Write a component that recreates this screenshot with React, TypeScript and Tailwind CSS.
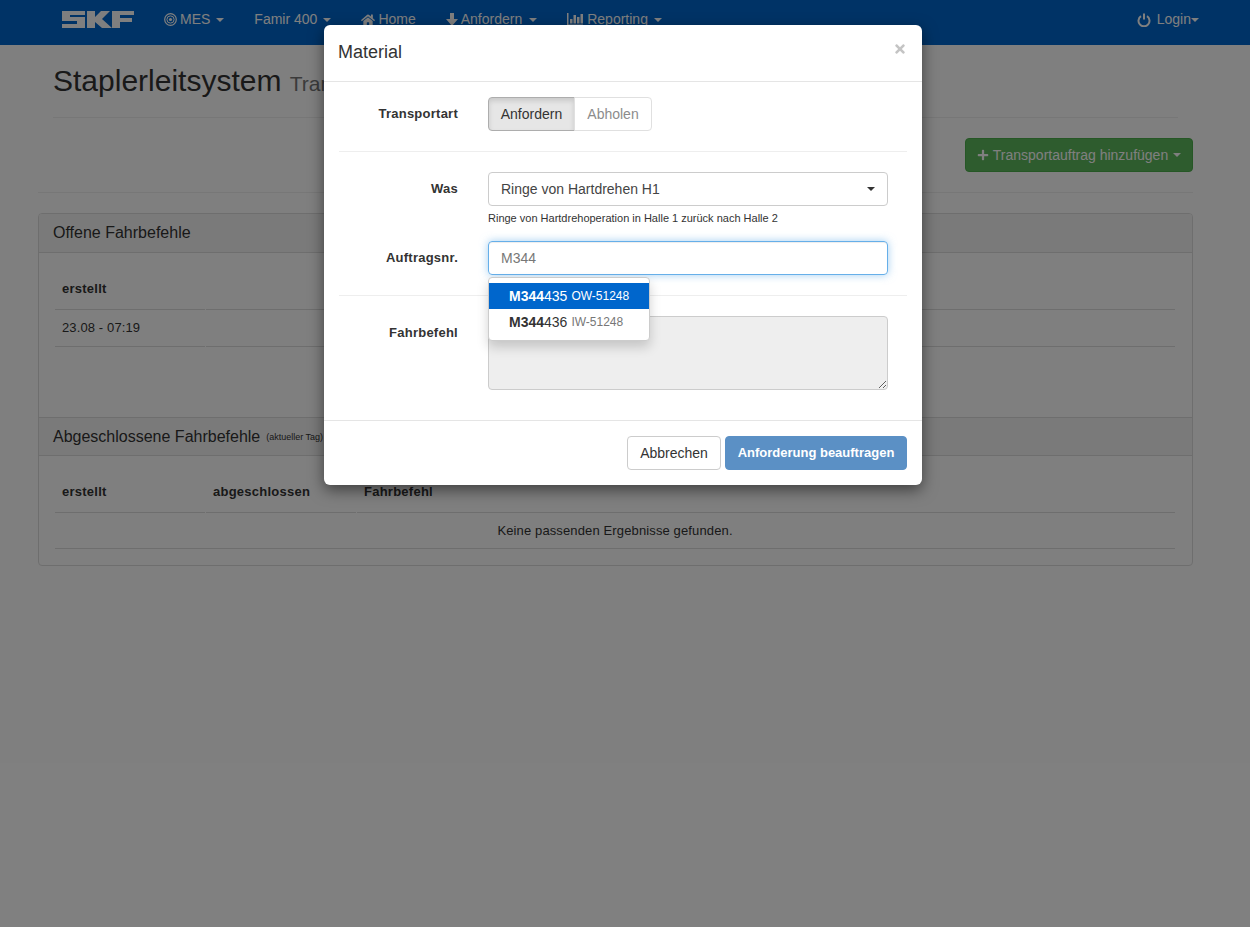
import { FaHome, FaPlus, FaTimes } from "react-icons/fa";

const Caret = ({ className = "" }: { className?: string }) => (
  <span className={`inline-block h-0 w-0 border-x-4 border-t-4 border-x-transparent border-t-current align-middle ${className}`} />
);

const SkfLogo = () => (
  <svg width="72" height="17" viewBox="0 0 72 17" fill="currentColor">
    <path d="M0 0h23v4H8v2h15v11H0v-4h15v-3H0z" />
    <path d="M25 0h8v6l6-6h9l-8 8 10 9h-10l-7-6v6h-8z" />
    <path d="M50 0h22v4H58v3h12v4H58v6h-8z" />
  </svg>
);

const MesIcon = () => (
  <svg width="13" height="13" viewBox="0 0 13 13" fill="none" stroke="currentColor">
    <circle cx="6.5" cy="6.5" r="5.8" strokeWidth="1.2" />
    <circle cx="6.5" cy="6.5" r="3.6" strokeWidth="1" />
    <circle cx="6.5" cy="6.5" r="1.6" fill="currentColor" strokeWidth="0" />
  </svg>
);

const ArrowIcon = () => (
  <svg width="12" height="13" viewBox="0 0 12 13" fill="currentColor">
    <path d="M4 0h4v6h4l-6 7-6-7h4z" />
  </svg>
);

const StatsIcon = () => (
  <svg width="16" height="13" viewBox="0 0 16 13" fill="currentColor">
    <path d="M0 0h1.5v11.5H16V13H0z" />
    <path d="M3 6h2.5v4.500H3zM6.500 2H9v8.500H6.500zM10 4h2.500v6.500H10zM13.500 1H16v9.500h-2.500z" />
  </svg>
);

const PowerIcon = () => (
  <svg width="14" height="14" viewBox="0 0 14 14" fill="none" stroke="currentColor" strokeWidth="2">
    <path d="M4 3.200a5.500 5.500 0 1 0 6 0" />
    <path d="M7 0.500v6" />
  </svg>
);

const NAV = [
  { label: "MES", icon: <MesIcon />, caret: "ml-[6px]", gap: "mr-[3px]" },
  { label: "Famir 400", caret: "ml-[6px]" },
  { label: "Home", icon: <FaHome className="text-[14px]" />, gap: "mr-[3px]" },
  { label: "Anfordern", icon: <ArrowIcon />, gap: "mr-[3px]", caret: "ml-[7px]" },
  { label: "Reporting", icon: <StatsIcon />, gap: "mr-[4px]", caret: "ml-[6px]" },
];

function Panel({ heading, small, headers, rows, bodyClass, headingClass }: {
  heading: string;
  small?: string;
  headers: string[];
  rows: React.ReactNode;
  bodyClass: string;
  headingClass: string;
}) {
  return (
    <section>
      <div className={`flex items-center border-b border-[#dddddd] bg-[#f5f5f5] px-[14px] text-[16px] text-[#333333] ${headingClass}`}>
        {heading}
        {small && <small className="ml-[6px] mt-[3px] text-[9px]">{small}</small>}
      </div>
      <div className={`pl-[15px] pr-[16px] ${bodyClass}`}>
        <table className="w-full border-separate border-spacing-x-[1px] border-spacing-y-0 text-[13px] text-[#333333]">
          <thead>
            <tr className="h-[57px]">
              {headers.map((h, i) => (
                <th
                  key={i}
                  className={`border-b border-[#dddddd] px-[7px] pb-[11px] text-left align-bottom font-bold tracking-[0.25px] ${i < 2 ? "w-[150px]" : ""}`}
                >
                  {h}
                </th>
              ))}
            </tr>
          </thead>
          <tbody>{rows}</tbody>
        </table>
      </div>
    </section>
  );
}

const labelClass = "w-[119px] pt-[7px] text-right text-[13px] font-bold tracking-[0.25px]";

export default function App() {
  return (
    <div className="relative h-[927px] w-[1250px] overflow-hidden bg-white font-['Liberation_Sans',Arial,sans-serif] text-[14px] text-[#333333]">
      <nav className="flex h-[45px] items-center gap-[30px] bg-[#0066cc] pb-[6px] pl-[62px] pr-[51px] text-white">
        <SkfLogo />
        {NAV.map((item) => (
          <span key={item.label} className="flex items-center">
            {item.icon && <span className={`flex ${item.gap}`}>{item.icon}</span>}
            {item.label}
            {item.caret && <Caret className={item.caret} />}
          </span>
        ))}
        <span className="ml-auto flex items-center">
          <span className="mr-[6px] flex">
            <PowerIcon />
          </span>
          Login
          <Caret />
        </span>
      </nav>

      <main className="ml-[38px] w-[1155px]">
        <div className="mx-[15px] h-[73px] border-b border-[#eeeeee] pt-[16px]">
          <h1 className="text-[30px] leading-[40px] text-[#333333]">
            Staplerleitsystem <small className="text-[21px] text-[#777777]">Transportaufträge</small>
          </h1>
        </div>
        <div className="flex h-[75px] items-start justify-end border-b border-[#eeeeee] pt-[20px]">
          <button className="flex h-[34px] w-[228px] items-center justify-center rounded border border-[#4cae4c] bg-[#5cb85c] text-white">
            <FaPlus className="mr-[4px] text-[12px]" />
            Transportauftrag hinzufügen
            <Caret className="ml-[5px]" />
          </button>
        </div>

        <div className="mt-[20px] h-[353px] overflow-hidden rounded border border-[#dddddd]">
          <Panel
            heading="Offene Fahrbefehle"
            headingClass="h-[39px]"
            headers={["erstellt", "", ""]}
            bodyClass="h-[164px]"
            rows={
              <tr className="h-[37px]">
                <td className="border-b border-[#dddddd] px-[7px] tracking-[0.12px]">23.08 - 07:19</td>
                <td className="border-b border-[#dddddd]" />
                <td className="border-b border-[#dddddd]" />
              </tr>
            }
          />
          <div className="border-t border-[#dddddd]">
            <Panel
              heading="Abgeschlossene Fahrbefehle"
              headingClass="h-[38px]"
              small="(aktueller Tag)"
              headers={["erstellt", "abgeschlossen", "Fahrbefehl"]}
              bodyClass=""
              rows={
                <tr className="h-[36px]">
                  <td colSpan={3} className="border-b border-[#dddddd] px-[7px] text-center tracking-[0.13px]">
                    Keine passenden Ergebnisse gefunden.
                  </td>
                </tr>
              }
            />
          </div>
        </div>
      </main>

      <div className="absolute inset-0 bg-black/50" />

      <div className="absolute left-[324px] top-[25px] w-[598px] rounded-md bg-white shadow-[0_5px_15px_rgba(0,0,0,0.5)]">
        <header className="relative h-[57px] border-b border-[#e5e5e5] pl-[14px] pt-[17px] text-[18px] leading-[20px]">
          Material
          <FaTimes className="absolute right-[15px] top-[17px] text-[14px] text-[#c4c4c4]" />
        </header>

        <div className="px-[15px]">
          <div className="flex h-[70px] border-b border-[#eeeeee] pt-[15px]">
            <label className={labelClass}>Transportart</label>
            <div className="ml-[30px] flex h-[34px]">
              <span className="flex w-[87px] items-center justify-center rounded-l border border-[#adadad] bg-[#e6e6e6] shadow-[inset_0_3px_5px_rgba(0,0,0,0.125)]">
                Anfordern
              </span>
              <span className="-ml-px flex w-[78px] items-center justify-center rounded-r border border-[#e0e0e0] text-[#8c8c8c]">
                Abholen
              </span>
            </div>
          </div>

          <div className="flex pt-[20px]">
            <label className={labelClass}>Was</label>
            <div className="ml-[30px] w-[400px]">
              <div className="flex h-[34px] items-center justify-between rounded border border-[#cccccc] px-[12px] text-[#444444]">
                Ringe von Hartdrehen H1
                <Caret className="text-[#333333]" />
              </div>
              <p className="mt-[5px] text-[11px] leading-[14px] text-[#333333]">
                Ringe von Hartdrehoperation in Halle 1 zurück nach Halle 2
              </p>
            </div>
          </div>

          <div className="flex h-[71px] border-b border-[#eeeeee] pt-[16px]">
            <label className={labelClass}>Auftragsnr.</label>
            <div className="ml-[30px] flex h-[34px] w-[400px] items-center rounded border border-[#66afe9] pl-[12px] text-[#777777] shadow-[inset_0_1px_1px_rgba(0,0,0,0.075),0_0_8px_rgba(102,175,233,0.6)]">
              M344
            </div>
          </div>

          <div className="flex pb-[30px] pt-[20px]">
            <label className={labelClass}>Fahrbefehl</label>
            <textarea
              disabled
              className="ml-[30px] h-[74px] w-[400px] rounded border border-[#cccccc] bg-[#eeeeee]"
            />
          </div>
        </div>

        <footer className="flex h-[65px] items-start justify-end gap-[4px] border-t border-[#e5e5e5] pr-[15px] pt-[15px]">
          <button className="h-[34px] w-[94px] rounded border border-[#cccccc] text-[#333333]">Abbrechen</button>
          <button className="h-[34px] w-[182px] rounded border border-[#5b90c5] bg-[#5b90c5] text-[13px] font-bold text-white">
            Anforderung beauftragen
          </button>
        </footer>

        {/* typeahead dropdown */}
        <div className="absolute left-[164px] top-[252px] w-[162px] rounded border border-[#cccccc] bg-white py-[5px] shadow-[0_6px_12px_rgba(0,0,0,0.175)]">
          <div className="flex h-[26px] items-center bg-[#0066cc] pl-[20px] text-white">
            <b>M344</b>435
            <span className="ml-[4px] text-[12px]">OW-51248</span>
          </div>
          <div className="flex h-[26px] items-center pl-[20px] text-[#333333]">
            <b>M344</b>436
            <span className="ml-[4px] text-[12px] text-[#777777]">IW-51248</span>
          </div>
        </div>
      </div>
    </div>
  );
}
